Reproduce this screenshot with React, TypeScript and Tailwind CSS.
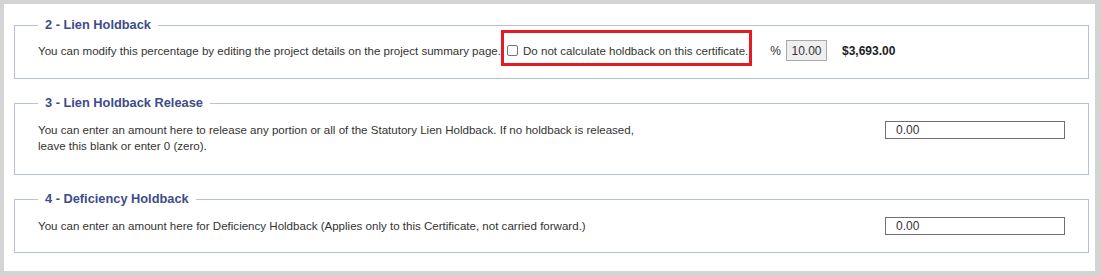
import React from "react";

interface SectionProps {
  title: string;
  className?: string;
  children: React.ReactNode;
}

function Section({ title, className, children }: SectionProps) {
  return (
    <fieldset className={`border border-[#b7c0e0] px-[23px] ${className ?? ""}`}>
      <legend className="px-[7px] text-[12.8px] leading-[16px] font-bold text-[#3d4c8a]">{title}</legend>
      {children}
    </fieldset>
  );
}

function AmountInput({ value }: { value: string }) {
  return (
    <input
      type="text"
      defaultValue={value}
      className="w-[180px] h-[18px] border border-[#707070] pl-[10px] text-[12px] text-[#333] outline-none"
    />
  );
}

export default function App() {
  return (
    <div className="w-[1101px] h-[276px] bg-[#d4d4d4] pt-[4px] pl-[4px] pr-[6px] pb-[5px] font-['Liberation_Sans',Arial,sans-serif] text-[11.55px] leading-[16px] text-[#333]">
      <div className="h-full bg-white pl-[10px] pr-[6px] pt-[13px] flex flex-col gap-[16px]">
        {/* 2 - Lien Holdback */}
        <Section title="2 - Lien Holdback" className="pt-[7px] pb-[17px]">
          <div className="flex items-center h-[21px] whitespace-nowrap">
            <span>You can modify this percentage by editing the project details on the project summary page.</span>
            <label className="relative flex items-center ml-[6px]">
              <input
                type="checkbox"
                className="appearance-none w-[11px] h-[11px] border border-[#767676] rounded-[2px] bg-white"
              />
              <span className="ml-[5px]">Do not calculate holdback on this certificate.</span>
              <span className="absolute left-[-6px] right-[-4px] top-[-13px] bottom-[-7px] border-[3px] border-[#e31b23] pointer-events-none" />
            </label>
            <span className="ml-[22px] text-[12px]">%</span>
            <input
              type="text"
              readOnly
              value="10.00"
              className="ml-[5px] w-[41px] h-[21px] bg-[#efefef] border border-[#a9a9a9] text-center text-[12px] text-[#333] outline-none"
            />
            <span className="ml-[15px] font-bold text-[12px] text-[#222]">$3,693.00</span>
          </div>
        </Section>

        {/* 3 - Lien Holdback Release */}
        <Section title="3 - Lien Holdback Release" className="pt-[10px] pb-[20px]">
          <div className="flex items-start justify-between">
            <p className="pt-[1px]">
              You can enter an amount here to release any portion or all of the Statutory Lien Holdback. If no holdback is released,
              <br />
              leave this blank or enter 0 (zero).
            </p>
            <AmountInput value="0.00" />
          </div>
        </Section>

        {/* 4 - Deficiency Holdback */}
        <Section title="4 - Deficiency Holdback" className="pt-[10px] pb-[17px]">
          <div className="flex items-center justify-between h-[18px]">
            <span>You can enter an amount here for Deficiency Holdback (Applies only to this Certificate, not carried forward.)</span>
            <AmountInput value="0.00" />
          </div>
        </Section>
      </div>
    </div>
  );
}
